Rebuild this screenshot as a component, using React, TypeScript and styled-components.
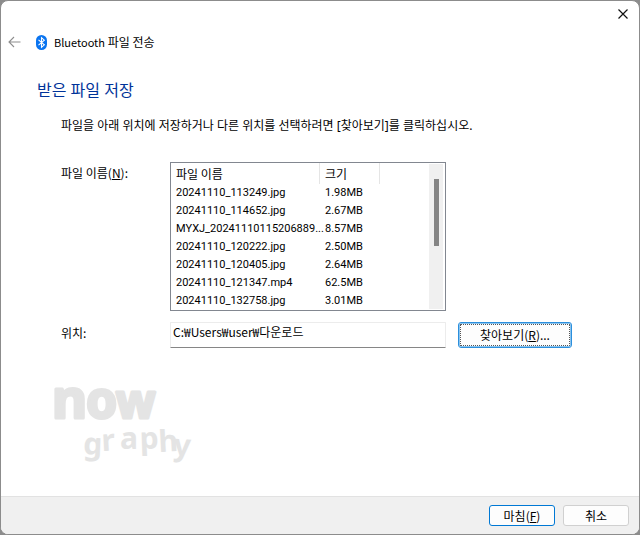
import React from "react";
import styled, { createGlobalStyle } from "styled-components";

const GlobalStyle = createGlobalStyle`
  *, *::before, *::after { box-sizing: border-box; }
  body {
    margin: 0;
    background: #8c8c8c;
    color: #000;
    font-family: "Noto Sans CJK KR", "Noto Sans", sans-serif;
    font-size: 12px;
    line-height: 18px;
  }
  button, input { font: inherit; color: inherit; }
`;

const Dialog = styled.div`
  display: flex;
  flex-direction: column;
  min-height: 100vh;
  border: 1px solid #8c8c8c;
  border-radius: 8px;
  background: #fff;
  overflow: hidden;
`;

const TitleBar = styled.div`
  display: flex;
  justify-content: flex-end;
`;

const CloseButton = styled.button`
  display: grid;
  place-items: center;
  width: 32px;
  height: 26px;
  padding: 0;
  border: 0;
  background: transparent;
`;

const WizardHeader = styled.header`
  display: flex;
  align-items: center;
  height: 30px;
  padding-left: 6px;
`;

const BackButton = styled.button`
  display: grid;
  place-items: center;
  width: 14px;
  height: 20px;
  margin-right: 15px;
  padding: 0;
  border: 0;
  background: transparent;
`;

const WizardTitle = styled.span`
  margin-left: 7px;
`;

const Latin = styled.span`
  font-size: 11px;
`;

const Main = styled.main`
  flex: 1;
  padding: 20px 67px 24px 36px;
`;

const Heading = styled.h1`
  margin: 0;
  color: #003399;
  font-family: "Noto Sans", "Noto Sans CJK KR", sans-serif;
  font-size: 16px;
  font-weight: 400;
  line-height: 26px;
`;

const Content = styled.div`
  padding-left: 24px;
`;

const Instruction = styled.p`
  margin: 14px 0 27px;
  font-family: "Noto Sans", "Noto Sans CJK KR", sans-serif;
  white-space: nowrap;
`;

const Form = styled.div`
  display: grid;
  grid-template-columns: 97px minmax(0, 1fr) 114px;
  gap: 11px 12px;
`;

const Label = styled.label`
  padding-top: 2px;
`;

const ListBox = styled.div`
  display: flex;
  height: 149px;
  padding-right: 2px;
  border: 1px solid #828790;
  overflow: hidden;
`;

const TableArea = styled.div`
  flex: 1;
  min-width: 0;
`;

const FileTable = styled.table`
  width: 100%;
  table-layout: fixed;
  border-collapse: separate;
  border-spacing: 0;
`;

const HeadCell = styled.th<{ $width?: number }>`
  width: ${(p) => (p.$width ? `${p.$width}px` : "auto")};
  height: 21px;
  padding: 0 4px 0 5px;
  border-right: ${(p) => (p.$width ? "1px solid #e5e5e5" : "0")};
  font-weight: 400;
  line-height: 20px;
  text-align: left;
`;

const Cell = styled.td`
  height: 18px;
  padding: 0 0 0 5px;
  font-family: Roboto, "Noto Sans", sans-serif;
  font-size: 11px;
  white-space: nowrap;
`;

const ScrollTrack = styled.div`
  flex: none;
  display: flex;
  justify-content: center;
  width: 14px;
  margin: 1px 0;
  padding: 15px 0 0 1px;
  background: #f0f0f0;
`;

const ScrollThumb = styled.div`
  width: 5px;
  height: 67px;
  background: #858585;
`;

const PathInput = styled.input`
  width: 100%;
  height: 26px;
  padding: 0 2px 8px;
  border: 1px solid #ececec;
  border-bottom-color: #868686;
  border-radius: 1px;
  background: #fff;
  outline: 0;
`;

const Button = styled.button<{ $accent?: boolean; $focused?: boolean }>`
  display: flex;
  align-items: center;
  justify-content: center;
  padding: 0;
  border: 1px solid ${(p) => (p.$accent ? "#0078d4" : "#d0d0d0")};
  border-radius: 3px;
  background: #fdfdfd;
  outline: ${(p) => (p.$focused ? "1px dotted #555" : "0")};
  outline-offset: -3px;
`;

const BrowseButton = styled(Button)`
  grid-column: 3;
  height: 26px;
  border-color: #2b8fdd;
  box-shadow: inset 0 0 0 1px #8cc4ee;
`;

const CommandButton = styled(Button)`
  width: 66px;
  height: 21px;
`;

const Logo = styled.svg`
  display: block;
  margin: 32px 0 0 16px;
  overflow: visible;
`;

const LogoText = styled.text`
  fill: #e4e4e4;
  stroke: #e4e4e4;
  stroke-linejoin: round;
  font-family: "Noto Sans", sans-serif;
  font-weight: 700;
`;

const Footer = styled.footer`
  display: flex;
  justify-content: flex-end;
  gap: 8px;
  height: 38px;
  padding: 8px 10px 0;
  border-top: 1px solid #e2e2e2;
  background: #f0f0f0;
`;

const files = [
  ["20241110_113249.jpg", "1.98MB"],
  ["20241110_114652.jpg", "2.67MB"],
  ["MYXJ_20241110115206889...", "8.57MB"],
  ["20241110_120222.jpg", "2.50MB"],
  ["20241110_120405.jpg", "2.64MB"],
  ["20241110_121347.mp4", "62.5MB"],
  ["20241110_132758.jpg", "3.01MB"],
];

export default function App() {
  return (
    <>
      <GlobalStyle />
      <Dialog role="dialog" aria-labelledby="wizard-title">
        <TitleBar>
          <CloseButton aria-label="닫기">
            <svg width="10" height="10" viewBox="0 0 10 10" stroke="#111" strokeWidth="1.2">
              <path d="M.5 .5l9 9M9.500 .5l-9 9" />
            </svg>
          </CloseButton>
        </TitleBar>
        <WizardHeader>
          <BackButton aria-label="뒤로">
            <svg width="13" height="12" viewBox="0 0 13 12" fill="none" stroke="#8e8e8e" strokeWidth="1.100">
              <path d="M12.500 6H1M6 1L1 6l5 5" />
            </svg>
          </BackButton>
          <svg width="11" height="15" viewBox="0 0 11 15" aria-hidden="true">
            <rect width="11" height="15" rx="5.500" fill="#0a74f0" />
            <path d="M2.500 4.800l5.800 5-2.800 2.500V2.700l2.800 2.500-5.800 5" fill="none" stroke="#fff" strokeWidth="1.100" />
          </svg>
          <WizardTitle id="wizard-title"><Latin>Bluetooth</Latin> 파일 전송</WizardTitle>
        </WizardHeader>
        <Main>
          <Heading>받은 파일 저장</Heading>
          <Content>
            <Instruction>
              파일을 아래 위치에 저장하거나 다른 위치를 선택하려면 [찾아보기]를 클릭하십시오.
            </Instruction>
            <Form>
              <Label as="span" id="files-label">
                파일 이름(<u>N</u>):
              </Label>
              <ListBox>
                <TableArea>
                  <FileTable aria-labelledby="files-label">
                    <thead>
                      <tr>
                        <HeadCell $width={149}>파일 이름</HeadCell>
                        <HeadCell $width={60}>크기</HeadCell>
                        <HeadCell as="td" />
                      </tr>
                    </thead>
                    <tbody>
                      {files.map(([name, size]) => (
                        <tr key={name}>
                          <Cell>{name}</Cell>
                          <Cell>{size}</Cell>
                          <Cell />
                        </tr>
                      ))}
                    </tbody>
                  </FileTable>
                </TableArea>
                <ScrollTrack>
                  <ScrollThumb />
                </ScrollTrack>
              </ListBox>
              <span />
              <Label htmlFor="path">위치:</Label>
              <PathInput id="path" defaultValue="C:₩Users₩user₩다운로드" />
              <BrowseButton $accent $focused>
                찾아보기(<u>R</u>)...
              </BrowseButton>
            </Form>
          </Content>
          <Logo width="138" height="88" viewBox="0 0 138 88" role="img" aria-label="now graphy">
            <LogoText y="38" strokeWidth="3">
              <tspan x="-1" fontSize="54">n</tspan>
              <tspan x="33" fontSize="50">o</tspan>
              <tspan x="63" y="38" fontSize="46">w</tspan>
            </LogoText>
            <LogoText
              x="30 49 67 87 106 120"
              y="74 71 69 69 72 75"
              rotate="2 -3 0 -2 -3 4"
              fontSize="30"
              strokeWidth="0"
            >
              graphy
            </LogoText>
          </Logo>
        </Main>
        <Footer>
          <CommandButton $accent>
            마침(<u>F</u>)
          </CommandButton>
          <CommandButton>취소</CommandButton>
        </Footer>
      </Dialog>
    </>
  );
}
